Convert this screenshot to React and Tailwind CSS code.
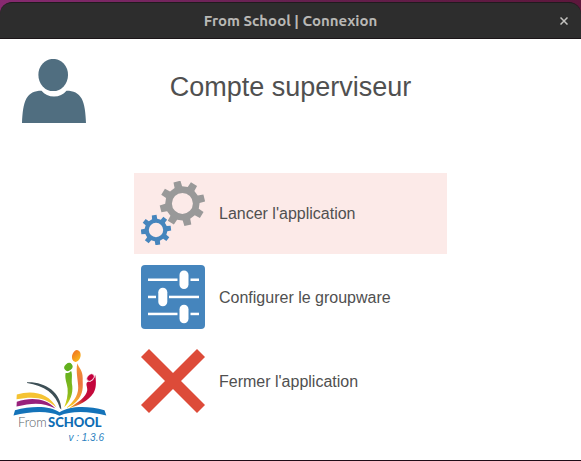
import React from "react";

function gearPath(cx, cy, outer, root, hole, teeth, startDeg) {
  const point = (r, deg) => {
    const a = ((deg - 90) * Math.PI) / 180;
    return `${(cx + r * Math.cos(a)).toFixed(2)} ${(cy + r * Math.sin(a)).toFixed(2)}`;
  };
  const step = 360 / teeth;
  const points = [];
  for (let i = 0; i < teeth; i += 1) {
    const mid = startDeg + i * step;
    points.push(point(root, mid - 13), point(outer, mid - 9), point(outer, mid + 9), point(root, mid + 13));
  }
  return (
    `M${points.join("L")}Z` +
    `M${cx - hole} ${cy}a${hole} ${hole} 0 1 0 ${hole * 2} 0a${hole} ${hole} 0 1 0 ${-hole * 2} 0Z`
  );
}

function GearsIcon() {
  return (
    <svg viewBox="0 0 64 64" className="size-16 shrink-0" aria-hidden="true">
      <path fillRule="evenodd" fill="#999999" d={gearPath(41.4, 22.4, 22.8, 17.2, 10.5, 8, -14)} />
      <path fillRule="evenodd" fill="#4585bd" d={gearPath(15, 49, 15.2, 11.4, 7.2, 8, -7)} />
    </svg>
  );
}

function SlidersIcon() {
  return (
    <svg viewBox="0 0 64 64" className="size-16 shrink-0" aria-hidden="true">
      <rect width="64" height="64" rx="4" fill="#4585bd" />
      <g fill="#ffffff">
        <rect x="7" y="13.5" width="29.5" height="2.5" />
        <rect x="49.5" y="13.5" width="8.5" height="2.5" />
        <rect x="38.5" y="5.5" width="9" height="18.5" rx="4.5" />
        <rect x="7" y="30.7" width="8" height="2.5" />
        <rect x="28" y="30.7" width="30" height="2.5" />
        <rect x="17.3" y="22.7" width="9" height="18.5" rx="4.5" />
        <rect x="7" y="47.7" width="29.5" height="2.5" />
        <rect x="49.5" y="47.7" width="8.5" height="2.5" />
        <rect x="38.5" y="39.8" width="9" height="18.5" rx="4.5" />
      </g>
    </svg>
  );
}

function CrossIcon() {
  return (
    <svg viewBox="0 0 64 64" className="size-16 shrink-0" aria-hidden="true">
      <path
        fill="#dd4b39"
        d="M8 0L32 24L56 0L64 8L40 32L64 56L56 64L32 40L8 64L0 56L24 32L0 8Z"
      />
    </svg>
  );
}

function UserIcon() {
  return (
    <svg viewBox="0 0 64 64" className="size-16" aria-hidden="true">
      <g fill="#506e80">
        <ellipse cx="31.2" cy="16" rx="14.8" ry="16.1" />
        <path d="M0 64C.4 54 1.4 45 4.4 39.5C7.5 34 12.5 31.7 19.5 31.7C22.5 35.5 27 37.6 32 37.6C37 37.6 41.5 35.5 44.5 31.7C51.5 31.7 56.5 34 59.6 39.5C62.6 45 63.6 54 64 64Z" />
      </g>
    </svg>
  );
}

function Logo() {
  return (
    <svg viewBox="0 0 94 80" className="h-20 w-[94px]" role="img" aria-label="From SCHOOL">
      <defs>
        <linearGradient id="flame" x1="0" y1="0" x2="0" y2="1">
          <stop offset="0" stopColor="#f29a2e" />
          <stop offset="0.45" stopColor="#ec7440" />
          <stop offset="0.75" stopColor="#f29a36" />
          <stop offset="1" stopColor="#fbd21d" />
        </linearGradient>
        <linearGradient id="leaf" x1="0" y1="0" x2="0" y2="1">
          <stop offset="0" stopColor="#62b01e" />
          <stop offset="0.7" stopColor="#8fbb1c" />
          <stop offset="1" stopColor="#f4d81c" />
        </linearGradient>
        <linearGradient id="berry" x1="1" y1="0" x2="0" y2="1">
          <stop offset="0" stopColor="#c4003d" />
          <stop offset="0.6" stopColor="#c4103a" />
          <stop offset="1" stopColor="#fbc51d" />
        </linearGradient>
        <linearGradient id="head" x1="0" y1="0" x2="1" y2="1">
          <stop offset="0" stopColor="#ee6a24" />
          <stop offset="1" stopColor="#fcc51a" />
        </linearGradient>
      </defs>
      <path fill="#3d4f56" d="M14 32.2C32 31.5 48 42 48.3 59.5L46.8 58C43 43.5 31 35.5 14 32.9Z" />
      <path fill="#f5c333" d="M3.8 44.5C20 39.5 36 43.5 43.5 57.5C33 47.5 21 45.8 3.5 49.3Z" />
      <path fill="#98217c" d="M3.8 51.7C19 46.8 33 48.5 42.5 58.5C31 52.5 20 52.3 3.5 56.5Z" />
      <path
        fill="#1473b9"
        d="M2 60.3C19 55.7 37 55.7 46.5 62.3C57 55.7 75 55.7 91.5 60.3L93.3 65.5C76 61 58 60.5 46.5 65.7C36 60.5 18 61 .5 65.5Z"
      />
      <path
        fill="url(#leaf)"
        d="M52.6 23C54 23 56.5 23.5 58 20.8C60 25 58 30 59.3 36C60 43 57.5 51.5 51.2 57.2C53.5 51.5 55.3 45 54.6 38.5C54 33 51.5 29 52.6 23Z"
      />
      <path
        fill="url(#flame)"
        d="M64.3 13.2C65.5 17.5 69.8 20 69.7 28C69.5 34 71.2 41 66 48.5C62.5 53.5 58 56 53 58C60 52.5 65 46 65.2 38C65.4 31 62.5 22 64.3 13.2Z"
      />
      <path
        fill="url(#berry)"
        d="M82.3 25C83.2 32 83.5 38 80.5 43C75.5 51 66 55.5 56 58C65 52.5 73 47 74.2 40.5C74.8 37 72 34 74.5 32C77 31.5 80.5 32 82.3 25Z"
      />
      <ellipse cx="63.3" cy="6" rx="4.2" ry="6" fill="url(#head)" transform="rotate(14 63.3 6)" />
      <ellipse cx="55.4" cy="17" rx="3.6" ry="4.4" fill="#62b01e" transform="rotate(50 55.4 17)" />
      <ellipse cx="77.5" cy="27.5" rx="3" ry="4.2" fill="#c4003d" stroke="#ffffff" strokeWidth="0.6" transform="rotate(45 77.5 27.5)" />
      <text x="5" y="77" fontSize="13" fill="#59636a" className="font-[Lato,sans-serif] font-light">
        From
      </text>
      <text x="35" y="77" fontSize="13" fill="#0f6db4" className="font-[Lato,sans-serif] font-black">
        SCHOOL
      </text>
    </svg>
  );
}

function MenuItem({ icon, label, active }) {
  return (
    <button
      type="button"
      className={`flex h-[81px] w-full items-center gap-3.5 px-[7px] pb-px text-left text-base text-[#505050] ${
        active ? "bg-[#fceae8]" : "bg-white"
      }`}
    >
      {icon}
      <span className="pt-0.5">{label}</span>
    </button>
  );
}

export default function App() {
  return (
    <div className="flex min-h-screen flex-col border-b border-[#1f0c18] bg-linear-to-r from-[#872a70] via-[#65204f] to-[#5d173c] font-['Liberation_Sans',Arial,sans-serif]">
      <header className="mt-0.5 grid h-[37px] grid-cols-[1fr_auto_1fr] items-center rounded-t-xl border-y border-t-[#201a1e] border-b-[#1b1518] bg-[#2d2d2d] px-[9px] text-[#b9b8b5]">
        <h1 className="col-start-2 pt-px font-[Ubuntu,'Noto_Sans',sans-serif] text-[15px] font-bold">
          From School | Connexion
        </h1>
        <button type="button" aria-label="Fermer" className="grid size-4 place-items-center justify-self-end">
          <svg viewBox="0 0 8 8" className="size-2" aria-hidden="true">
            <path d="M.5 .5L7.5 7.5M7.5 .5L.5 7.5" stroke="#c4c3c0" strokeWidth="1.5" fill="none" />
          </svg>
        </button>
      </header>

      <main className="grid grow grid-cols-[134px_1fr_134px] grid-rows-[auto_1fr] bg-white">
        <div className="pt-5 pl-[22px]">
          <UserIcon />
        </div>
        <h2 className="pt-7 text-center text-[27px] leading-10 whitespace-nowrap text-[#505050]">
          Compte superviseur
        </h2>

        <aside className="col-start-1 row-start-2 flex flex-col self-end pb-4 pl-[13px]">
          <Logo />
          <p className="w-[91px] pt-0.5 text-right text-[10px] leading-3 text-[#2b7fc0] italic">v : 1.3.6</p>
        </aside>

        <nav className="col-start-2 row-start-2 flex flex-col gap-[3px] pt-[50px]">
          <MenuItem icon={<GearsIcon />} label="Lancer l'application" active />
          <MenuItem icon={<SlidersIcon />} label="Configurer le groupware" />
          <MenuItem icon={<CrossIcon />} label="Fermer l'application" />
        </nav>
      </main>
    </div>
  );
}
